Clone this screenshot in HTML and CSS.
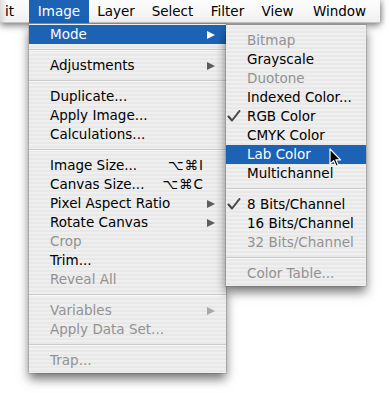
FILE: index.html
```html
<!DOCTYPE html>
<html>
<head>
<meta charset="utf-8">
<link rel="stylesheet" href="styles.css">
</head>
<body>
<div class="screen">
  <div class="menubar">
    <span class="mb-item mb-edit">it</span>
    <span class="mb-item mb-image active">Image</span>
    <span class="mb-item mb-layer">Layer</span>
    <span class="mb-item mb-select">Select</span>
    <span class="mb-item mb-filter">Filter</span>
    <span class="mb-item mb-view">View</span>
    <span class="mb-item mb-window">Window</span>
  </div>

  <div class="menu main-menu">
    <div class="item hl"><span>Mode</span><i class="arrow"></i></div>
    <div class="sep"></div>
    <div class="item"><span>Adjustments</span><i class="arrow"></i></div>
    <div class="sep"></div>
    <div class="item"><span>Duplicate...</span></div>
    <div class="item"><span>Apply Image...</span></div>
    <div class="item"><span>Calculations...</span></div>
    <div class="sep"></div>
    <div class="item"><span>Image Size...</span><span class="key">⌥⌘I</span></div>
    <div class="item"><span>Canvas Size...</span><span class="key">⌥⌘C</span></div>
    <div class="item"><span>Pixel Aspect Ratio</span><i class="arrow"></i></div>
    <div class="item"><span>Rotate Canvas</span><i class="arrow"></i></div>
    <div class="item off"><span>Crop</span></div>
    <div class="item"><span>Trim...</span></div>
    <div class="item off"><span>Reveal All</span></div>
    <div class="sep"></div>
    <div class="item off"><span>Variables</span><i class="arrow"></i></div>
    <div class="item off"><span>Apply Data Set...</span></div>
    <div class="sep"></div>
    <div class="item off"><span>Trap...</span></div>
  </div>

  <div class="menu sub-menu">
    <div class="item off"><span>Bitmap</span></div>
    <div class="item"><span>Grayscale</span></div>
    <div class="item off"><span>Duotone</span></div>
    <div class="item"><span>Indexed Color...</span></div>
    <div class="item checked"><svg class="check" width="14" height="12" viewBox="0 0 14 12"><path d="M1.5 6.5 L5 10.5 L12.5 1" fill="none" stroke="#444" stroke-width="2" stroke-linecap="round" stroke-linejoin="round"/></svg><span>RGB Color</span></div>
    <div class="item"><span>CMYK Color</span></div>
    <div class="item hl"><span>Lab Color</span></div>
    <div class="item"><span>Multichannel</span></div>
    <div class="sep"></div>
    <div class="item checked"><svg class="check" width="14" height="12" viewBox="0 0 14 12"><path d="M1.5 6.5 L5 10.5 L12.5 1" fill="none" stroke="#444" stroke-width="2" stroke-linecap="round" stroke-linejoin="round"/></svg><span>8 Bits/Channel</span></div>
    <div class="item"><span>16 Bits/Channel</span></div>
    <div class="item off"><span>32 Bits/Channel</span></div>
    <div class="sep"></div>
    <div class="item off"><span>Color Table...</span></div>
  </div>

  <svg class="cursor" width="13" height="20" viewBox="0 0 13 20"><path d="M1 1 L1 16 L4.6 12.6 L7.2 18.4 L9.4 17.4 L6.9 11.8 L11.6 11.8 Z" fill="#000" stroke="#fff" stroke-width="1.2" stroke-linejoin="round"/></svg>
</div>
</body>
</html>
```

FILE: styles.css
```css
* { box-sizing: border-box; }
html, body {
  margin: 0;
  padding: 0;
  background: #fff;
}
.screen {
  position: relative;
  width: 391px;
  height: 393px;
  overflow: hidden;
  background: #fff;
  font-family: "DejaVu Sans", "Liberation Sans", sans-serif;
  font-size: 13.5px;
  color: #000;
}
.menubar {
  display: flex;
  width: 380px;
  height: 23px;
  background: linear-gradient(90deg, rgba(0,0,0,0.12) 0, rgba(0,0,0,0) 7px), linear-gradient(#fdfdfd, #f1f1f1);
  box-shadow: 0 3px 7px rgba(0,0,0,0.4), 2px 0 5px rgba(0,0,0,0.25);
  border-bottom: 1px solid #c4c4c4;
}
.mb-item {
  display: block;
  height: 23px;
  line-height: 22px;
  text-align: center;
  white-space: nowrap;
}
.mb-edit { width: 29px; text-align: left; padding-left: 5px; }
.mb-image { width: 60px; }
.mb-layer { width: 54px; }
.mb-select { width: 59px; }
.mb-filter { width: 51px; }
.mb-view { width: 49px; }
.mb-window { width: 75px; }
.mb-item.active {
  background: #1d63b5;
  color: #fff;
}

.menu {
  position: absolute;
  display: flex;
  flex-direction: column;
  background: repeating-linear-gradient(#efefef 0 2px, #e8e8e8 2px 4px);
  box-shadow: 0 0 0 1px rgba(0,0,0,0.1), 0 6px 10px rgba(0,0,0,0.55);
  padding-bottom: 3px;
}
.main-menu {
  left: 29px;
  top: 24px;
  width: 197px;
  padding-top: 1px;
  z-index: 1;
}
.sub-menu {
  left: 226px;
  top: 25px;
  width: 140px;
  padding-top: 6px;
  z-index: 2;
}
.item {
  position: relative;
  display: flex;
  align-items: center;
  justify-content: space-between;
  height: 19px;
  line-height: 19px;
  padding: 0 11px 0 21px;
  white-space: nowrap;
}
.item.off { color: #929292; }
.item.hl {
  background: #1d63b5;
  color: #fff;
}
.key {
  margin-right: 11px;
  letter-spacing: 1px;
}
.arrow {
  display: block;
  width: 0;
  height: 0;
  border-left: 8px solid #5c5c5c;
  border-top: 4.5px solid transparent;
  border-bottom: 4.5px solid transparent;
}
.item.off .arrow { border-left-color: #a9a9a9; }
.item.hl .arrow { border-left-color: #fff; }
.check {
  position: absolute;
  left: 1px;
  top: 3px;
}
.sep {
  height: 12px;
  padding-top: 5px;
}
.sep::before {
  content: "";
  display: block;
  height: 1px;
  background: #cbcbcb;
  box-shadow: 0 1px 0 #f8f8f8;
}
.cursor {
  position: absolute;
  left: 329px;
  top: 148px;
  z-index: 3;
}
```
